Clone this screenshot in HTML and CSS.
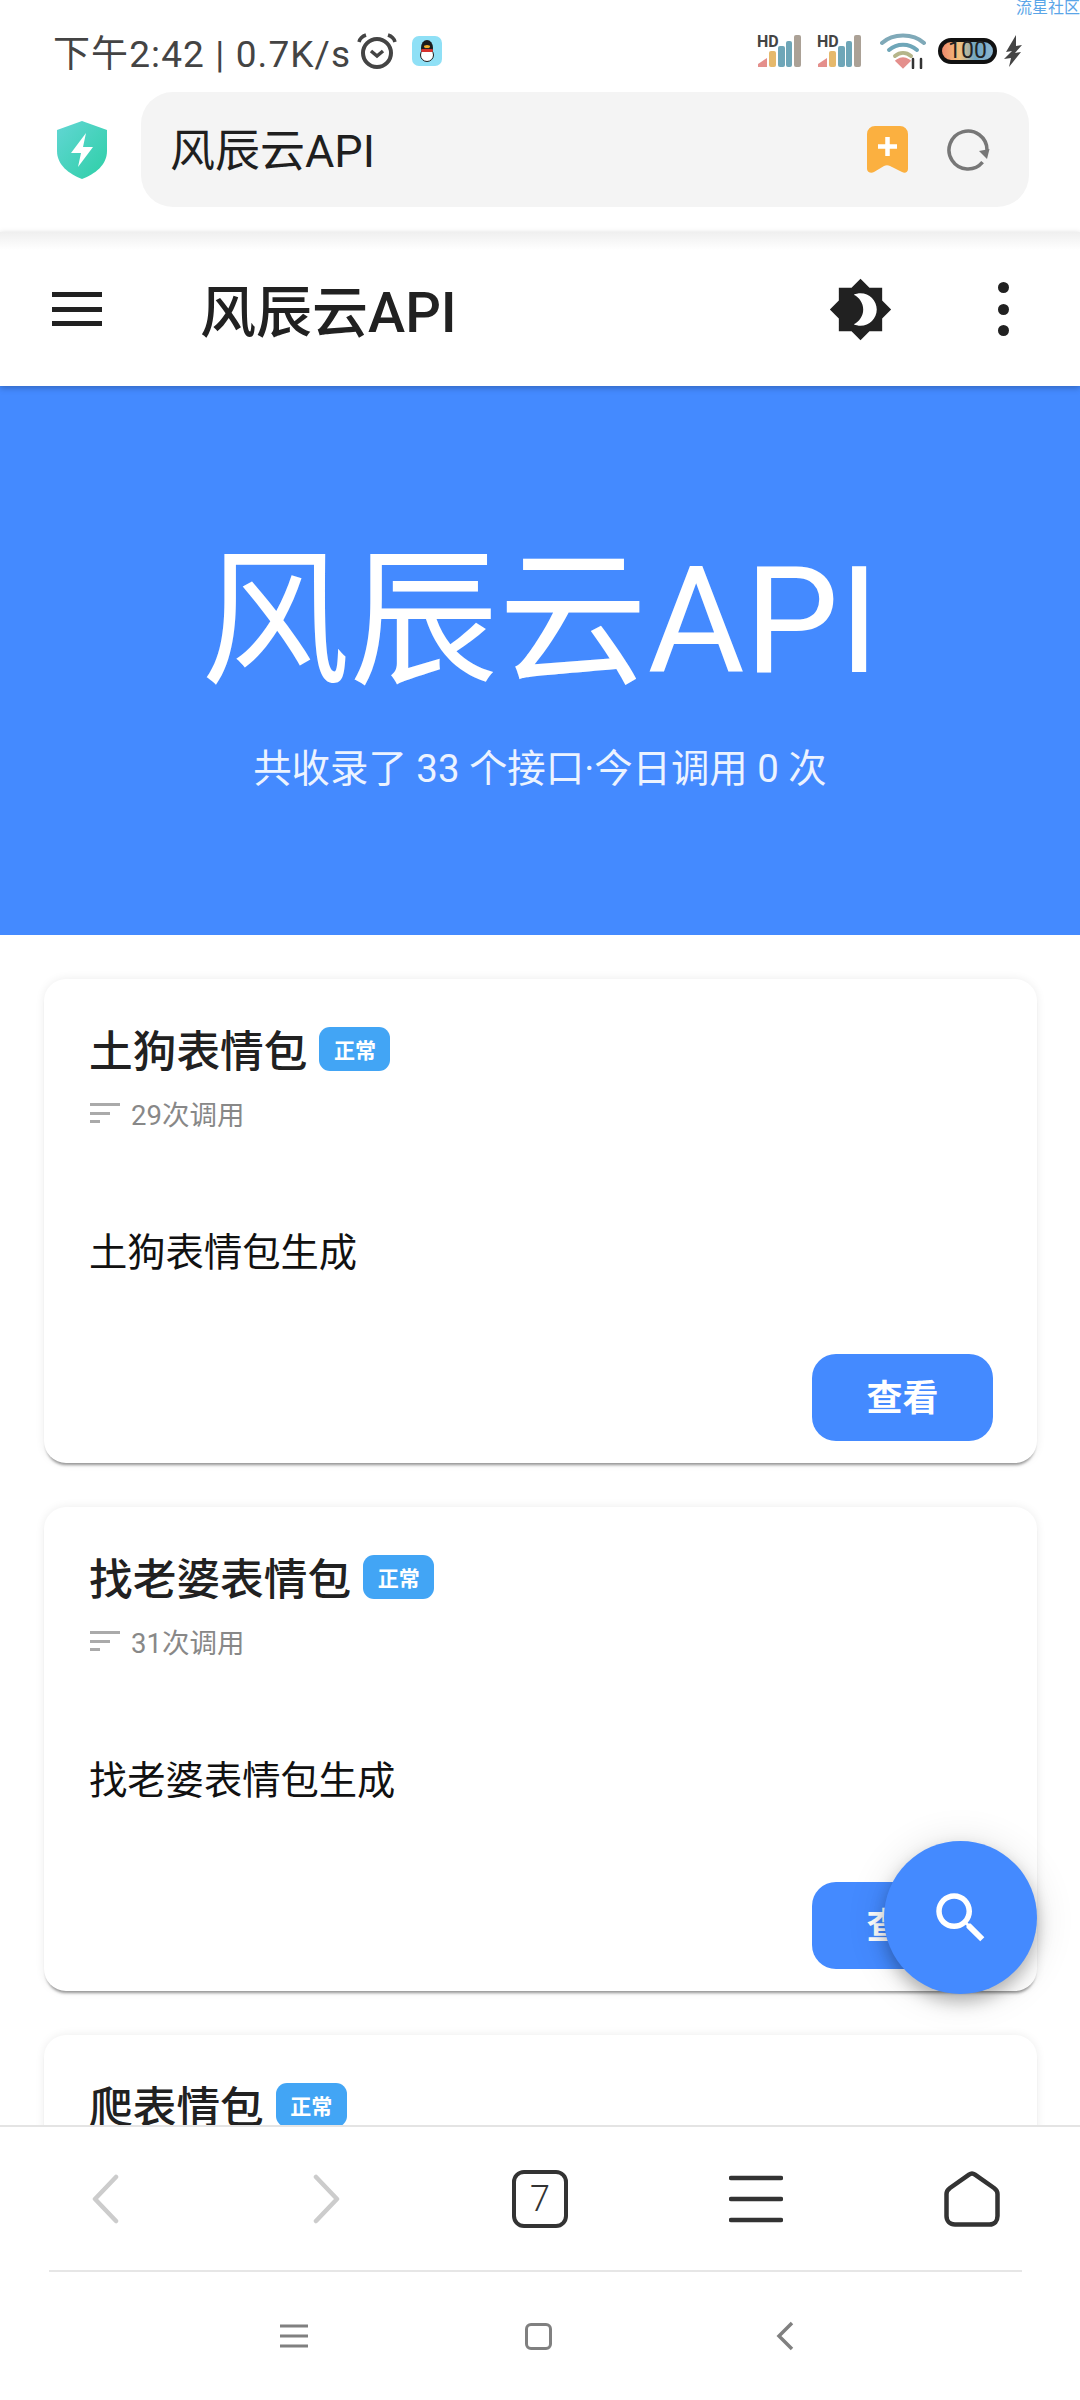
FILE: index.html
```html
<!DOCTYPE html>
<html lang="zh-CN">
<head>
    <meta charset="UTF-8">
    <meta name="viewport" content="width=device-width, initial-scale=1.0">
    <title>风辰云API</title>
    <link rel="stylesheet" href="styles.css">
</head>
<body>
    <div class="screen">
        <span class="watermark">流星社区</span>

        <div class="browser-top">
            <div class="status-bar">
                <span class="status-text">下午2:42 | 0.7K/s</span>
                <svg class="alarm" viewBox="0 0 40 38" fill="none" stroke="#444">
                    <circle cx="20" cy="21" r="14" stroke-width="4"/>
                    <path d="M14 19l6 5 6-5" stroke-width="3.5"/>
                    <path d="M2 10c1-4 4-6 7-7M38 10c-1-4-4-6-7-7" stroke-width="3.5"/>
                </svg>
                <svg class="qq" viewBox="0 0 30 30">
                    <rect width="30" height="30" rx="7" fill="#8fe0f6"/>
                    <ellipse cx="15" cy="12" rx="6" ry="8" fill="#1c1c1c"/>
                    <ellipse cx="15" cy="19" rx="6.5" ry="6.5" fill="#fff" stroke="#1c1c1c"/>
                    <rect x="9" y="13" width="12" height="3" rx="1.5" fill="#d8322e"/>
                    <ellipse cx="15" cy="10.5" rx="3" ry="1.5" fill="#f3b02c"/>
                </svg>
                <div class="status-icons">
                    <div class="signal">
                        <span class="hd">HD</span>
                        <svg viewBox="0 0 44 34">
                            <path d="M1 33v-3l9-6v9z" fill="#e48f8c"/>
                            <rect x="12" y="17" width="7" height="16" rx="2" fill="#e6b96c"/>
                            <rect x="21" y="12" width="7" height="21" rx="2" fill="#6ea6b8"/>
                            <rect x="29" y="7" width="6" height="26" rx="2" fill="#6ea6b8"/>
                            <rect x="37" y="1" width="7" height="32" rx="2" fill="#aba196"/>
                        </svg>
                    </div>
                    <div class="signal">
                        <span class="hd">HD</span>
                        <svg viewBox="0 0 44 34">
                            <path d="M1 33v-3l9-6v9z" fill="#e48f8c"/>
                            <rect x="12" y="17" width="7" height="16" rx="2" fill="#e6b96c"/>
                            <rect x="21" y="12" width="7" height="21" rx="2" fill="#6ea6b8"/>
                            <rect x="29" y="7" width="6" height="26" rx="2" fill="#6ea6b8"/>
                            <rect x="37" y="1" width="7" height="32" rx="2" fill="#aba196"/>
                        </svg>
                    </div>
                    <svg class="wifi" viewBox="0 0 46 36" fill="none" stroke-width="4" stroke-linecap="round">
                        <path d="M2 10C13 0 33 0 44 10" stroke="#7fa9b8"/>
                        <path d="M9 17c8-7 20-7 28 0" stroke="#6ea6b8"/>
                        <path d="M15 23c5-4 11-4 16 0" stroke="#b5b58a"/>
                        <path d="M18 28c3-2 7-2 10 0l-5 5z" fill="#e48f8c" stroke="#e48f8c"/>
                        <path d="M33 26v9M41 26v9" stroke="#333" stroke-width="2.5"/>
                    </svg>
                    <div class="battery">
                        <span class="battery-num">100</span>
                    </div>
                    <svg class="bolt" viewBox="0 0 18 32">
                        <path d="M12 0L2 17l6-1-8 8 7-1-2 9 12-15-6 1 7-8-6 1z" fill="#444"/>
                    </svg>
                </div>
            </div>
            <div class="address-row">
                <svg class="shield" viewBox="0 0 52 58">
                    <defs>
                        <linearGradient id="shieldFill" x1="0" y1="0" x2="1" y2="1">
                            <stop offset="0" stop-color="#62d6d4"/>
                            <stop offset="1" stop-color="#2dcfa6"/>
                        </linearGradient>
                    </defs>
                    <path d="M26 0l25 9v21c0 14-12 23-25 28C13 53 1 44 1 30V9z" fill="url(#shieldFill)"/>
                    <path d="M30 12L15 32h10l-3 14 15-20H27z" fill="#fff"/>
                </svg>
                <div class="address-bar">
                    <span class="address-text">风辰云API</span>
                    <svg class="bookmark" viewBox="0 0 41 47">
                        <path d="M8 0h25a8 8 0 0 1 8 8v35c0 3-3 5-6 3l-12-6c-2-1-4-1-6 0L7 46c-3 2-7 0-7-3V8a8 8 0 0 1 8-8z" fill="#fbb040"/>
                        <path d="M20.500 11v19M11 20.500h19" stroke="#fff" stroke-width="4.500"/>
                    </svg>
                    <svg class="reload" viewBox="0 0 44 44" fill="none">
                        <path d="M36.600 34.200A19 19 0 1 1 41 22" stroke="#777" stroke-width="3.500"/>
                        <path d="M43.500 21L33 23l8 8z" fill="#777"/>
                    </svg>
                </div>
            </div>
        </div>

        <header class="app-bar">
            <div class="menu-icon"><i></i><i></i><i></i></div>
            <span class="app-title">风辰云API</span>
            <svg class="theme-icon" viewBox="0 0 24 24">
                <path d="M20 8.690V4h-4.690L12 .690 8.690 4H4v4.690L.690 12 4 15.310V20h4.690L12 23.310 15.310 20H20v-4.690L23.310 12 20 8.690zM12 18c-.890 0-1.740-.200-2.500-.550C11.560 16.500 13 14.420 13 12s-1.440-4.500-3.500-5.450C10.260 6.200 11.110 6 12 6c3.310 0 6 2.690 6 6s-2.690 6-6 6z" fill="#212121"/>
            </svg>
            <div class="more-icon"><i></i><i></i><i></i></div>
        </header>

        <main class="content">
            <section class="hero">
                <h1 class="hero-title">风辰云API</h1>
                <p class="hero-sub">共收录了 33 个接口·今日调用 0 次</p>
            </section>

            <div class="card">
                <div class="card-head">
                    <span class="card-title">土狗表情包</span>
                    <span class="badge">正常</span>
                </div>
                <div class="card-meta">
                    <span class="sort-icon"><i></i><i></i><i></i></span>
                    <span>29次调用</span>
                </div>
                <p class="card-desc">土狗表情包生成</p>
                <div class="card-actions"><button class="view-btn">查看</button></div>
            </div>

            <div class="card">
                <div class="card-head">
                    <span class="card-title">找老婆表情包</span>
                    <span class="badge">正常</span>
                </div>
                <div class="card-meta">
                    <span class="sort-icon"><i></i><i></i><i></i></span>
                    <span>31次调用</span>
                </div>
                <p class="card-desc">找老婆表情包生成</p>
                <div class="card-actions"><button class="view-btn">查看</button></div>
            </div>

            <div class="card">
                <div class="card-head">
                    <span class="card-title">爬表情包</span>
                    <span class="badge">正常</span>
                </div>
            </div>
        </main>

        <button class="fab">
            <svg viewBox="0 0 24 24" width="66" height="66">
                <path d="M15.500 14h-.790l-.280-.270C15.410 12.590 16 11.110 16 9.500 16 5.910 13.090 3 9.500 3S3 5.910 3 9.500 5.910 16 9.500 16c1.610 0 3.090-.590 4.230-1.570l.270.280v.790l5 4.990L20.490 19l-4.990-5zm-6 0C7.010 14 5 11.990 5 9.500S7.010 5 9.500 5 14 7.010 14 9.500 11.990 14 9.500 14z" fill="#fff"/>
            </svg>
        </button>

        <footer class="browser-bottom">
            <div class="tool-row">
                <svg class="chevron chevron-back" viewBox="0 0 28 50" fill="none"><path d="M25 3L4 25l21 22" stroke="#ccc" stroke-width="4.500" stroke-linecap="round" stroke-linejoin="round"/></svg>
                <svg class="chevron chevron-next" viewBox="0 0 28 50" fill="none"><path d="M3 3l21 22L3 47" stroke="#ccc" stroke-width="4.500" stroke-linecap="round" stroke-linejoin="round"/></svg>
                <span class="tabs-count">7</span>
                <svg class="tool-menu" viewBox="0 0 54 48" fill="none"><path d="M2 3h50M2 24h50M2 45h50" stroke="#333" stroke-width="4.500" stroke-linecap="round"/></svg>
                <svg class="tool-home" viewBox="0 0 56 56" fill="none"><path d="M28 2.500c1 0 2 .500 3 1.200L50 17c2 1.500 3.500 3.500 3.500 6v22c0 5-3 8.500-8 8.500H11c-5 0-8.500-3.500-8.500-8.500V23c0-2.500 1.500-4.500 3.500-6L25 3.700c1-.700 2-1.200 3-1.200z" stroke="#333" stroke-width="4.500"/></svg>
            </div>
            <div class="tool-divider"></div>
            <div class="nav-row">
                <svg class="nav-menu" viewBox="0 0 28 24" fill="none"><path d="M0 2h28M0 12h28M0 22h28" stroke="#808080" stroke-width="3"/></svg>
                <span class="nav-home"></span>
                <svg class="nav-back" viewBox="0 0 18 30" fill="none"><path d="M16 2L3 15l13 13" stroke="#808080" stroke-width="3.500"/></svg>
            </div>
        </footer>
    </div>
</body>
</html>
```
FILE: styles.css
```css
* {
    box-sizing: border-box;
}
body {
    margin: 0;
    background-color: #fff;
    font-family: Roboto, "Noto Sans CJK SC", sans-serif;
    color: #212121;
}
p, h1 {
    margin: 0;
}
i {
    display: block;
}
.screen {
    width: 1080px;
    height: 2400px;
    display: flex;
    flex-direction: column;
    position: relative;
    overflow: hidden;
}
.watermark {
    position: absolute;
    top: 0;
    right: 0;
    font-size: 16px;
    line-height: 15px;
    color: #5aa5e8;
    z-index: 5;
}

/* browser chrome, top */
.browser-top {
    height: 232px;
    flex-shrink: 0;
    background: #fff;
}
.status-bar {
    height: 92px;
    padding: 9px 58px 0 53px;
    display: flex;
    align-items: center;
}
.status-text {
    font-size: 37px;
    letter-spacing: 1.1px;
    color: #444;
    white-space: nowrap;
}
.alarm {
    width: 40px;
    height: 38px;
    margin-left: 6px;
}
.qq {
    width: 30px;
    height: 30px;
    margin-left: 15px;
}
.status-icons {
    margin-left: auto;
    display: flex;
    align-items: center;
}
.signal {
    width: 44px;
    height: 34px;
    margin-right: 16px;
    position: relative;
}
.signal svg {
    display: block;
    width: 44px;
    height: 34px;
}
.hd {
    position: absolute;
    left: 0;
    top: 0;
    font-size: 16px;
    line-height: 16px;
    font-weight: 700;
    color: #444;
}
.wifi {
    width: 46px;
    height: 36px;
    margin: 0 12px 0 3px;
}
.battery {
    width: 59px;
    height: 26px;
    border: 4px solid #111;
    border-radius: 13px;
    background: linear-gradient(90deg, #ef8a6c 0, #f2c27f 35%, #6ea6c4 65%, #8fb6d0 100%);
    display: flex;
    align-items: center;
    justify-content: center;
}
.battery-num {
    font-size: 23px;
    line-height: 18px;
    color: #222;
}
.bolt {
    width: 18px;
    height: 32px;
    margin-left: 7px;
}
.address-row {
    display: flex;
    align-items: center;
    padding: 0 51px 0 56px;
}
.shield {
    width: 52px;
    height: 58px;
    margin-right: 33px;
}
.address-bar {
    flex: 1;
    height: 115px;
    padding: 0 39px 0 29px;
    background: #f4f4f4;
    border-radius: 32px;
    display: flex;
    align-items: center;
}
.address-text {
    font-size: 45px;
    color: #1f1f1f;
    flex: 1;
    padding-bottom: 5px;
}
.bookmark {
    width: 41px;
    height: 47px;
    margin-right: 38px;
}
.reload {
    width: 44px;
    height: 44px;
}

/* site header */
.app-bar {
    height: 154px;
    flex-shrink: 0;
    padding: 0 71px 0 52px;
    display: flex;
    align-items: center;
    background: linear-gradient(#efefef, #fff 18px);
    box-shadow: 0 2px 6px rgba(0,0,0,0.25);
    position: relative;
    z-index: 2;
}
.menu-icon {
    width: 50px;
    height: 34px;
    display: flex;
    flex-direction: column;
    justify-content: space-between;
}
.menu-icon i {
    height: 5px;
    background: #212121;
}
.app-title {
    margin-left: 98px;
    font-size: 56px;
    font-weight: 500;
    flex: 1;
    padding-bottom: 3px;
}
.theme-icon {
    width: 65px;
    height: 65px;
    margin-right: 105px;
}
.more-icon {
    width: 11px;
    height: 54px;
    display: flex;
    flex-direction: column;
    justify-content: space-between;
}
.more-icon i {
    width: 11px;
    height: 11px;
    border-radius: 50%;
    background: #212121;
}

/* page body */
.content {
    flex: 1;
    min-height: 0;
    overflow: hidden;
}
.hero {
    height: 549px;
    background: #448aff;
    color: #fff;
    text-align: center;
    padding-top: 135px;
    margin-bottom: 44px;
}
.hero-title {
    font-size: 149px;
    font-weight: 400;
    line-height: 200px;
}
.hero-sub {
    margin-top: 18px;
    font-size: 38.4px;
    line-height: 60px;
    opacity: 0.9;
}
.card {
    margin: 0 43px 44px 44px;
    padding: 40px 45px 22px;
    background: #fff;
    border-radius: 22px;
    box-shadow: 0 4px 3px -2px rgba(0,0,0,0.4), 0 0 10px rgba(0,0,0,0.08);
}
.card-head {
    height: 60px;
    display: flex;
    align-items: center;
}
.card-title {
    font-size: 43.7px;
    font-weight: 500;
    padding-bottom: 2px;
}
.badge {
    margin-left: 12px;
    width: 71px;
    height: 44px;
    border-radius: 11px;
    background: #42a5f5;
    color: #fff;
    font-size: 21px;
    font-weight: 700;
    display: flex;
    align-items: center;
    justify-content: center;
}
.card-meta {
    margin-top: 14px;
    height: 40px;
    display: flex;
    align-items: center;
    font-size: 27.5px;
    color: #888;
}
.sort-icon {
    width: 30px;
    height: 20px;
    margin-right: 11px;
    margin-left: 1px;
    display: flex;
    flex-direction: column;
    justify-content: space-between;
}
.sort-icon i {
    height: 3px;
    background: #aaa;
}
.sort-icon i:nth-child(1) {
    width: 30px;
}
.sort-icon i:nth-child(2) {
    width: 20px;
}
.sort-icon i:nth-child(3) {
    width: 10px;
}
.card-desc {
    margin-top: 92px;
    font-size: 38.3px;
    line-height: 56px;
    color: #111;
}
.card-actions {
    margin-top: 73px;
    display: flex;
    justify-content: flex-end;
}
.view-btn {
    width: 181px;
    height: 87px;
    margin-right: -1px;
    padding: 0 0 6px;
    border: none;
    border-radius: 24px;
    background: #448aff;
    color: #fff;
    font-family: inherit;
    font-size: 36px;
    font-weight: 700;
}
.fab {
    position: absolute;
    left: 884px;
    top: 1841px;
    width: 153px;
    height: 153px;
    padding: 0;
    border: none;
    border-radius: 50%;
    background: #448aff;
    display: flex;
    align-items: center;
    justify-content: center;
    box-shadow: 0 8px 16px rgba(0,0,0,0.25), 0 3px 40px rgba(0,0,0,0.12);
    z-index: 3;
}

/* browser chrome, bottom */
.browser-bottom {
    height: 275px;
    flex-shrink: 0;
    background: #fff;
    border-top: 2px solid #e4e4e4;
    position: relative;
    z-index: 4;
}
.tool-row {
    height: 143px;
    display: grid;
    grid-template-columns: repeat(5, 216px);
    justify-items: center;
    align-items: center;
}
.tool-divider {
    height: 2px;
    margin: 0 58px 0 49px;
    background: #e6e6e6;
}
.chevron {
    width: 28px;
    height: 50px;
}
.chevron-back {
    margin-right: 6px;
}
.chevron-next {
    margin-left: 6px;
}
.tabs-count {
    width: 56px;
    height: 58px;
    border: 4.5px solid #333;
    border-radius: 12px;
    font-size: 36px;
    font-weight: 300;
    color: #333;
    display: flex;
    align-items: center;
    justify-content: center;
}
.tool-menu {
    width: 54px;
    height: 48px;
}
.tool-home {
    width: 56px;
    height: 56px;
}
.nav-row {
    height: 128px;
    padding: 0 286px 0 280px;
    display: flex;
    align-items: center;
    justify-content: space-between;
}
.nav-menu {
    width: 28px;
    height: 24px;
}
.nav-home {
    width: 27px;
    height: 27px;
    margin-right: 8px;
    border: 3.5px solid #808080;
    border-radius: 6px;
}
.nav-back {
    width: 18px;
    height: 30px;
}
```
